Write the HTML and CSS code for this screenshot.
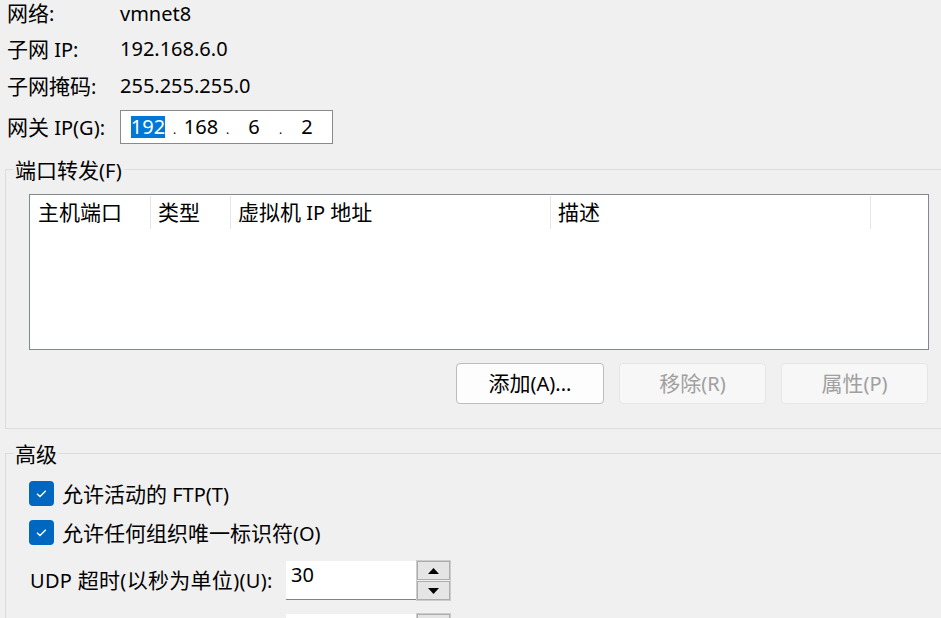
FILE: index.html
```html
<!DOCTYPE html>
<html lang="zh-CN">
<head>
<meta charset="utf-8">
<title>NAT 设置</title>
<link rel="stylesheet" href="styles.css">
</head>
<body>
<div class="page">
  <div class="info">
    <div class="row r1"><span class="lbl"><span class="zh">网络</span>:</span><span class="val">vmnet8</span></div>
    <div class="row r2"><span class="lbl"><span class="zh">子网</span> IP:</span><span class="val">192.168.6.0</span></div>
    <div class="row r3"><span class="lbl"><span class="zh">子网掩码</span>:</span><span class="val">255.255.255.0</span></div>
    <div class="row r4"><span class="lbl"><span class="zh">网关</span> IP(G):</span>
      <div class="ipbox">
        <span class="oct"><span class="sel">192</span></span><span class="dot">.</span>
        <span class="oct">168</span><span class="dot">.</span>
        <span class="oct">6</span><span class="dot">.</span>
        <span class="oct">2</span>
      </div>
    </div>
  </div>

  <fieldset class="group g1">
    <legend><span class="zh">端口转发</span>(F)</legend>
    <div class="g1-body">
      <div class="list">
        <div class="list-head">
          <div class="col c1"><span class="zh">主机端口</span></div>
          <div class="col c2"><span class="zh">类型</span></div>
          <div class="col c3"><span class="zh">虚拟机</span> IP <span class="zh">地址</span></div>
          <div class="col c4"><span class="zh">描述</span></div>
        </div>
      </div>
      <div class="btns">
        <button class="btn b1"><span class="zh">添加</span>(A)...</button>
        <button class="btn disabled"><span class="zh">移除</span>(R)</button>
        <button class="btn disabled"><span class="zh">属性</span>(P)</button>
      </div>
    </div>
  </fieldset>

  <fieldset class="group g2">
    <legend><span class="zh">高级</span></legend>
    <div class="g2-body">
      <div class="check">
        <span class="box"><svg width="25" height="25" viewBox="0 0 25 25"><path d="M8 12.8 L11 15.6 L16.8 9.8" fill="none" stroke="#fff" stroke-width="1.4"/></svg></span>
        <span class="ctext"><span class="zh">允许活动的</span> FTP(T)</span>
      </div>
      <div class="check c2row">
        <span class="box"><svg width="25" height="25" viewBox="0 0 25 25"><path d="M8 12.8 L11 15.6 L16.8 9.8" fill="none" stroke="#fff" stroke-width="1.4"/></svg></span>
        <span class="ctext"><span class="zh">允许任何组织唯一标识符</span>(O)</span>
      </div>
      <div class="spinrow">
        <span class="slabel">UDP <span class="zh">超时</span>(<span class="zh">以秒为单位</span>)(U):</span>
        <div class="spin">
          <div class="sinput">30</div>
          <div class="sbtns">
            <div class="sb"><svg width="11" height="6" viewBox="0 0 11 6"><path d="M0 6 L5.5 0 L11 6Z" fill="#000"/></svg></div>
            <div class="sb"><svg width="11" height="6" viewBox="0 0 11 6"><path d="M0 0 L5.5 6 L11 0Z" fill="#000"/></svg></div>
          </div>
        </div>
      </div>
      <div class="spinrow second">
        <span class="slabel"></span>
        <div class="spin">
          <div class="sinput"></div>
          <div class="sbtns">
            <div class="sb"><svg width="11" height="6" viewBox="0 0 11 6"><path d="M0 6 L5.5 0 L11 6Z" fill="#000"/></svg></div>
            <div class="sb"><svg width="11" height="6" viewBox="0 0 11 6"><path d="M0 0 L5.5 6 L11 0Z" fill="#000"/></svg></div>
          </div>
        </div>
      </div>
    </div>
  </fieldset>
</div>
</body>
</html>
```
FILE: styles.css
```css
html, body {
  margin: 0;
  padding: 0;
  background: #f0f0f0;
  overflow: hidden;
}
body {
  font-family: "Noto Sans", "Noto Sans CJK SC", sans-serif;
  font-size: 20px;
  color: #000;
  width: 941px;
  height: 618px;
}
.zh {
  font-family: "Noto Sans CJK SC", sans-serif;
  font-size: 21px;
  display: inline-block;
  line-height: 24px;
}
.page {
  width: 941px;
}
.info {
  padding-left: 7px;
  padding-top: 1px;
}
.row {
  display: flex;
  align-items: center;
  height: 26px;
  line-height: 26px;
}
.r1 { height: 25px; }
.r2 { margin-top: 10px; }
.r3 { margin-top: 11px; }
.r4 { margin-top: 11px; height: 34px; }
.lbl {
  width: 113px;
  flex: none;
  white-space: nowrap;
}
.ipbox {
  width: 204px;
  height: 32px;
  border: 1px solid #8a8a8a;
  background: #fff;
  display: flex;
  align-items: center;
  padding-left: 7px;
  box-sizing: content-box;
  line-height: 22px;
}
.oct {
  width: 40px;
  text-align: center;
  flex: none;
}
.dot {
  width: 13px;
  flex: none;
  font-size: 12px;
  text-align: center;
  align-self: flex-end;
  line-height: 20px;
  padding-bottom: 3px;
}
.sel {
  background: #0078d7;
  color: #fff;
  display: inline-block;
  line-height: 22px;
}

.group {
  margin: 0;
  padding: 0;
  border: 1px solid #dcdcdc;
  margin-left: 5px;
  margin-right: -30px;
  min-width: 0;
}
.group legend {
  margin-left: 7px;
  padding: 2px 2px 0;
  line-height: 26px;
  height: 28px;
  box-sizing: border-box;
}
.g1 { margin-top: 11px; }
.g1-body {
  padding: 11px 0 24px 23px;
}
.list {
  width: 898px;
  height: 154px;
  border: 1px solid #828790;
  background: #fff;
}
.list-head {
  display: flex;
  margin-top: 1px;
  height: 33px;
  line-height: 33px;
}
.col {
  border-right: 1px solid #e5e5e5;
  padding-left: 7px;
  box-sizing: border-box;
  white-space: nowrap;
}
.c1 { width: 121px; padding-left: 8px; }
.c2 { width: 80px; }
.c3 { width: 320px; }
.c4 { width: 320px; }
.btns {
  display: flex;
  justify-content: flex-end;
  gap: 15px;
  margin-top: 13px;
  width: 899px;
}
.btn {
  width: 147px;
  height: 41px;
  font-family: inherit;
  font-size: 20px;
  color: #000;
  background: #fdfdfd;
  border: 1px solid #bdbdbd;
  border-radius: 4px;
  padding: 0;
  line-height: 38px;
}
.btn.b1 { width: 148px; }
.btn.disabled {
  background: #f7f7f7;
  border-color: #e6e6e6;
  color: #a0a0a0;
}

.g2 { margin-top: 10px; }
.g2-body {
  padding: 14px 0 40px 23px;
}
.check {
  display: flex;
  align-items: center;
  height: 25px;
  line-height: 25px;
}
.c2row { margin-top: 14px; }
.box {
  width: 25px;
  height: 25px;
  background: #0067c0;
  border-radius: 4px;
  display: block;
  flex: none;
}
.box svg { display: block; }
.ctext {
  margin-left: 8px;
  white-space: nowrap;
}
.spinrow {
  display: flex;
  align-items: center;
  margin-top: 15px;
  padding-left: 1px;
}
.spinrow.second { margin-top: 12px; }
.slabel {
  width: 256px;
  flex: none;
  white-space: nowrap;
  letter-spacing: 0.3px;
}
.spin {
  display: flex;
  height: 41px;
}
.sinput {
  width: 125px;
  height: 38px;
  margin-top: 1px;
  background: #fff;
  border-bottom: 1px solid #838383;
  padding-left: 5px;
  line-height: 28px;
}
.sbtns {
  width: 33px;
  height: 39px;
  border: 1px solid #cccccc;
  display: flex;
  flex-direction: column;
  gap: 1px;
  background: #f0f0f0;
}
.sb {
  flex: 1;
  border: 1px solid #adadad;
  background: #e5e5e5;
  display: flex;
  align-items: center;
  justify-content: center;
}
.sb svg { display: block; }
```
